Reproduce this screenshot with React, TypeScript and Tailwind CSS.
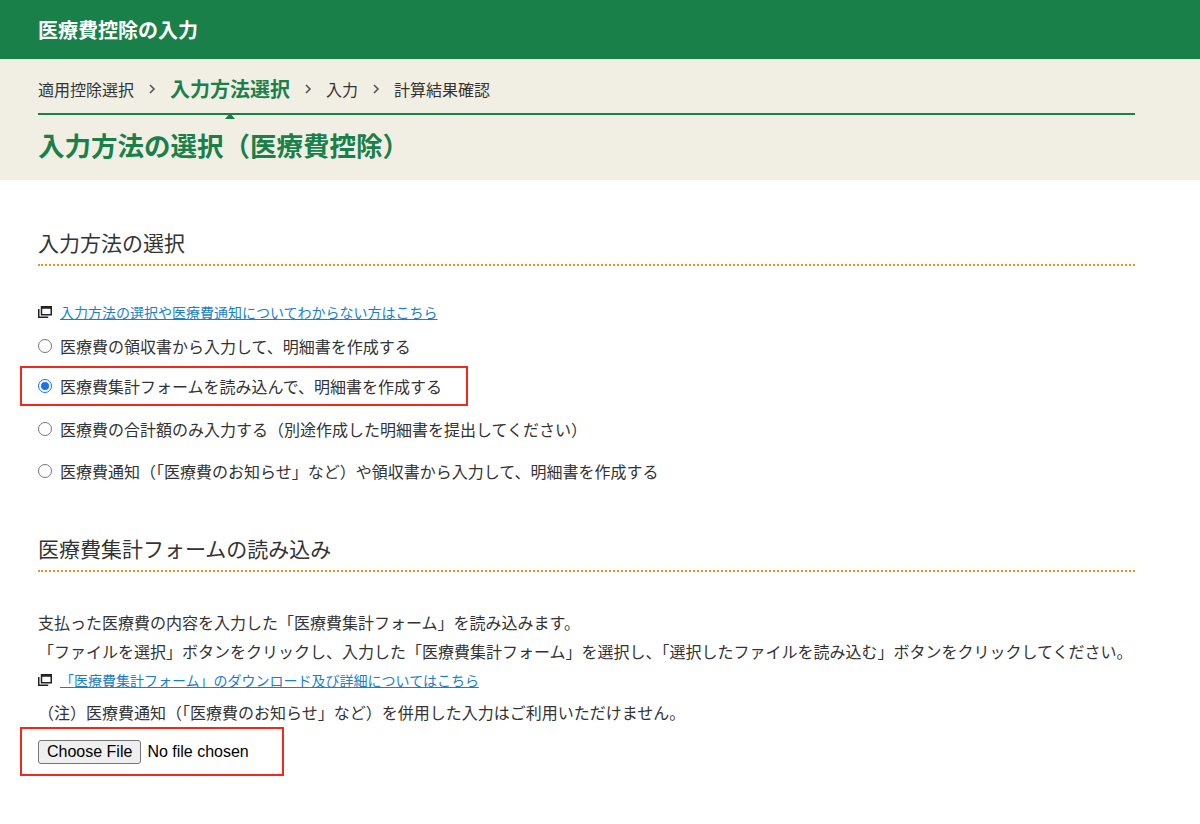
export default function App() {
  const f = { fontFamily: '"Noto Sans CJK JP", "Noto Sans", sans-serif' };
  const Ext = () => (
    <svg width="14" height="12" viewBox="0 0 14 12" className="shrink-0">
      <rect x="3.5" y="0.75" width="9.75" height="8" fill="none" stroke="#222" strokeWidth="1.5" />
      <rect x="3.5" y="0.75" width="9.75" height="2" fill="#222" />
      <path d="M0.75 3v8.25h9.5" fill="none" stroke="#222" strokeWidth="1.5" />
    </svg>
  );
  const Radio = ({ on }: { on?: boolean }) => (
    <span className={`inline-flex w-[14px] h-[14px] rounded-full border shrink-0 items-center justify-center ${on ? "border-[#1a73e8] bg-white" : "border-[#767676] bg-white"}`}>
      {on && <span className="w-[8px] h-[8px] rounded-full bg-[#1a73e8]" />}
    </span>
  );
  const Chev = () => (
    <svg width="8" height="12" viewBox="0 0 8 12" className="mx-[14px]">
      <path d="M2 2l4 4-4 4" fill="none" stroke="#555" strokeWidth="1.6" />
    </svg>
  );
  return (
    <div style={f} className="w-[1200px] h-[824px] overflow-hidden bg-white text-[#333]">
      <div className="h-[60px] bg-[#1a804a] flex items-center px-[38px] border-b border-[#e5e5da]">
        <span className="text-white text-[20px] font-bold">医療費控除の入力</span>
      </div>
      <div className="bg-[#f1efe4] h-[120px] px-[38px] pr-[65px]">
        <div className="relative flex items-center h-[55px] pt-[5px] border-b-2 border-[#1a804a] text-[16px]">
          <span>適用控除選択</span>
          <Chev />
          <span className="relative text-[20px] font-bold text-[#1a804a]">
            入力方法選択
            <span className="absolute left-1/2 -translate-x-1/2 bottom-[-15px] w-0 h-0 border-l-[5px] border-r-[5px] border-b-[6px] border-l-transparent border-r-transparent border-b-[#1a804a]" />
          </span>
          <Chev />
          <span>入力</span>
          <Chev />
          <span>計算結果確認</span>
        </div>
        <div className="text-[26.5px] font-bold text-[#1a804a] pt-[12px] leading-[36px]">入力方法の選択（医療費控除）</div>
      </div>
      <div className="px-[38px] pr-[65px]">
        <div className="mt-[46px] text-[21px] leading-[32px] pb-[6px] border-b-2 border-dotted border-[#e8960c]">入力方法の選択</div>
        <div className="mt-[36px] flex items-center gap-[8px] text-[14px] leading-[20px]">
          <Ext />
          <a className="text-[#1a7fc8] underline">入力方法の選択や医療費通知についてわからない方はこちら</a>
        </div>
        <div className="text-[16px]">
          <div className="flex items-center gap-[8px] h-[28px] mt-[10px]"><Radio />医療費の領収書から入力して、明細書を作成する</div>
          <div className="-ml-[18px] w-[448px] h-[40px] mt-[6px] border-2 border-[#f02a1a] flex items-center gap-[8px] pl-[16px]"><Radio on />医療費集計フォームを読み込んで、明細書を作成する</div>
          <div className="flex items-center gap-[8px] h-[30px] mt-[8px]"><Radio />医療費の合計額のみ入力する（別途作成した明細書を提出してください）</div>
          <div className="flex items-center gap-[8px] h-[30px] mt-[12px]"><Radio />医療費通知（「医療費のお知らせ」など）や領収書から入力して、明細書を作成する</div>
        </div>
        <div className="mt-[46px] text-[21px] leading-[32px] pb-[6px] border-b-2 border-dotted border-[#e8960c]">医療費集計フォームの読み込み</div>
        <div className="mt-[36px] text-[16px] leading-[29px]">
          <div>支払った医療費の内容を入力した「医療費集計フォーム」を読み込みます。</div>
          <div>「ファイルを選択」ボタンをクリックし、入力した「医療費集計フォーム」を選択し、「選択したファイルを読み込む」ボタンをクリックしてください。</div>
        </div>
        <div className="flex items-center gap-[8px] text-[14px] leading-[20px] mt-[4px]">
          <Ext />
          <a className="text-[#1a7fc8] underline">「医療費集計フォーム」のダウンロード及び詳細についてはこちら</a>
        </div>
        <div className="text-[16px] leading-[29px] mt-[8px]">（注）医療費通知（「医療費のお知らせ」など）を併用した入力はご利用いただけません。</div>
        <div className="-ml-[18px] w-[264px] h-[49px] border-2 border-[#f02a1a] flex items-center pl-[16px] gap-[6px]" style={{ fontFamily: '"Liberation Sans", Arial, sans-serif' }}>
          <span className="px-[8px] h-[24px] flex items-center text-[16px] text-black bg-[#efefef] border border-[#767676] rounded-[3px]">Choose File</span>
          <span className="text-[16px] text-black">No file chosen</span>
        </div>
      </div>
    </div>
  );
}
